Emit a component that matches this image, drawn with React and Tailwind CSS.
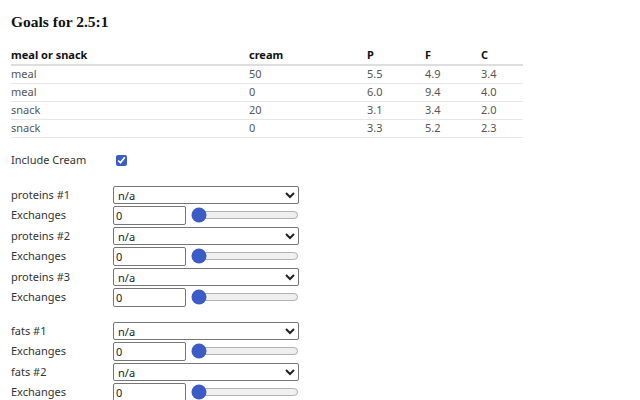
import React from "react";

const rows = [
  ["meal", "50", "5.5", "4.9", "3.4"],
  ["meal", "0", "6.0", "9.4", "4.0"],
  ["snack", "20", "3.1", "3.4", "2.0"],
  ["snack", "0", "3.3", "5.2", "2.3"],
];

const Picker = ({ label }) => (
  <>
    <div className="flex items-center h-[20.5px]">
      <span className="w-[102px] text-[11px] text-[#333]">{label}</span>
      <select className="w-[186px] h-[18px] border border-[#767676] rounded-[2px] bg-white text-[11px] pl-0 text-[#222]">
        <option>n/a</option>
      </select>
    </div>
    <div className="flex items-center h-[20.5px]">
      <span className="w-[102px] text-[11px] text-[#333]">Exchanges</span>
      <input
        type="text"
        defaultValue="0"
        className="w-[73px] h-[19px] border border-[#767676] rounded-[2px] text-[11px] px-[2px] text-[#222]"
      />
      <input
        type="range"
        defaultValue="0"
        className="ml-[5px] w-[108px] h-[12px] accent-[#3b5cc7]"
      />
    </div>
  </>
);

export default function App() {
  return (
    <div className="px-[11px] pt-[12px] font-['Noto_Sans',sans-serif] text-[#333] bg-white">
      <h1 className="font-['Liberation_Serif',serif] font-bold text-[15.5px] leading-[20px] text-[#111]">
        Goals for 2.5:1
      </h1>

      <table className="mt-[15px] w-[512px] text-[11px] table-fixed border-collapse">
        <colgroup>
          <col className="w-[238px]" />
          <col className="w-[118px]" />
          <col className="w-[58px]" />
          <col className="w-[56px]" />
          <col />
        </colgroup>
        <thead>
          <tr className="border-b-2 border-[#ddd] h-[18px]">
            {["meal or snack", "cream", "P", "F", "C"].map((h) => (
              <th key={h} className="text-left font-bold text-[#111] p-0">
                {h}
              </th>
            ))}
          </tr>
        </thead>
        <tbody>
          {rows.map((r, i) => (
            <tr key={i} className="border-b border-[#e6e6e6] h-[18px]">
              {r.map((c, j) => (
                <td key={j} className="p-0 text-[#555]">
                  {c}
                </td>
              ))}
            </tr>
          ))}
        </tbody>
      </table>

      <div className="mt-[13px] flex items-center h-[20px]">
        <span className="w-[105px] text-[11px]">Include Cream</span>
        <input type="checkbox" defaultChecked className="w-[11px] h-[11px] m-0 accent-[#3b5cc7]" />
      </div>

      <div className="mt-[14px]">
        <Picker label="proteins #1" />
        <Picker label="proteins #2" />
        <Picker label="proteins #3" />
      </div>
      <div className="mt-[13px]">
        <Picker label="fats #1" />
        <Picker label="fats #2" />
      </div>
    </div>
  );
}
